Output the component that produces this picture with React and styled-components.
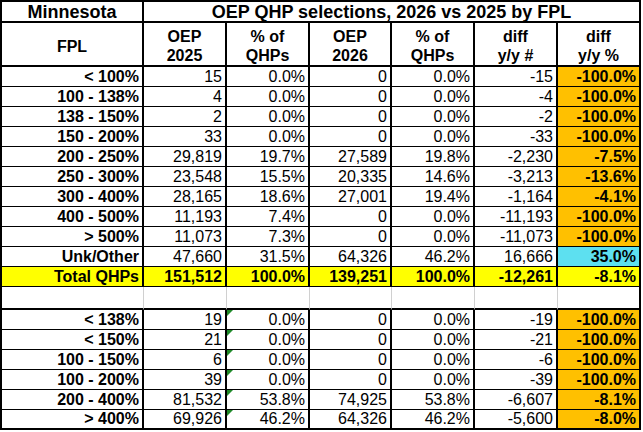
import React from "react";
import styled, { createGlobalStyle, css } from "styled-components";

const GlobalStyle = createGlobalStyle`
  html, body {
    margin: 0;
    padding: 0;
    background: #fff;
  }
  body {
    font-family: "Liberation Sans", Arial, sans-serif;
    color: #000;
  }
`;

const COLORS = {
  orange: "#ffc000",
  yellow: "#ffff00",
  cyan: "#5de0f0",
};

const Sheet = styled.div`
  display: grid;
  grid-template-columns: 142px 83px 83px 82px 83px 83px 83px;
  grid-template-rows: 21px 44px repeat(11, 20px) 23px repeat(6, 20px);
  width: max-content;
  border-left: 2px solid #000;
  border-top: 2px solid #000;
`;

const Cell = styled.div`
  position: relative;
  box-sizing: border-box;
  display: flex;
  align-items: center;
  justify-content: ${(p) => (p.$center ? "center" : "flex-end")};
  padding: 0 ${(p) => (p.$center ? 0 : 3)}px 0 0;
  border-right: 2px solid #000;
  border-bottom: ${(p) => p.$bottom || "1px solid #000"};
  background: ${(p) => (p.$bg ? COLORS[p.$bg] : "#fff")};
  font-size: 16px;
  font-weight: ${(p) => (p.$bold ? 700 : 400)};
  white-space: nowrap;
  line-height: 1;
  ${(p) =>
    p.$span &&
    css`
      grid-column: span ${p.$span};
    `}
  ${(p) =>
    p.$flag &&
    css`
      &::before {
        content: "";
        position: absolute;
        top: 0;
        left: 0;
        border-top: 6px solid #1f8a2a;
        border-right: 6px solid transparent;
      }
    `}
`;

const TitleCell = styled(Cell)`
  font-size: 18px;
  font-weight: 700;
  border-bottom: 2px solid #000;
`;

const HeadCell = styled(Cell)`
  flex-direction: column;
  justify-content: center;
  padding-top: 4px;
  border-bottom: 2px solid #000;
  font-weight: 700;
  line-height: 19px;
`;

const GapCell = styled.div`
  box-sizing: border-box;
  border-right: 1px solid ${(p) => (p.$last ? "#000" : "#d0d0d0")};
  border-bottom: 2px solid #000;
  ${(p) => p.$last && "border-right-width: 2px;"}
`;

const heads = [
  ["OEP", "2025"],
  ["% of", "QHPs"],
  ["OEP", "2026"],
  ["% of", "QHPs"],
  ["diff", "y/y #"],
  ["diff", "y/y %"],
];

const top = [
  ["< 100%", "15", "0.0%", "0", "0.0%", "-15", "-100.0%", "orange"],
  ["100 - 138%", "4", "0.0%", "0", "0.0%", "-4", "-100.0%", "orange"],
  ["138 - 150%", "2", "0.0%", "0", "0.0%", "-2", "-100.0%", "orange"],
  ["150 - 200%", "33", "0.0%", "0", "0.0%", "-33", "-100.0%", "orange"],
  ["200 - 250%", "29,819", "19.7%", "27,589", "19.8%", "-2,230", "-7.5%", "orange"],
  ["250 - 300%", "23,548", "15.5%", "20,335", "14.6%", "-3,213", "-13.6%", "orange"],
  ["300 - 400%", "28,165", "18.6%", "27,001", "19.4%", "-1,164", "-4.1%", "orange"],
  ["400 - 500%", "11,193", "7.4%", "0", "0.0%", "-11,193", "-100.0%", "orange"],
  ["> 500%", "11,073", "7.3%", "0", "0.0%", "-11,073", "-100.0%", "orange"],
  ["Unk/Other", "47,660", "31.5%", "64,326", "46.2%", "16,666", "35.0%", "cyan"],
];

const total = ["Total QHPs", "151,512", "100.0%", "139,251", "100.0%", "-12,261", "-8.1%"];

const bottom = [
  ["< 138%", "19", "0.0%", "0", "0.0%", "-19", "-100.0%"],
  ["< 150%", "21", "0.0%", "0", "0.0%", "-21", "-100.0%"],
  ["100 - 150%", "6", "0.0%", "0", "0.0%", "-6", "-100.0%"],
  ["100 - 200%", "39", "0.0%", "0", "0.0%", "-39", "-100.0%"],
  ["200 - 400%", "81,532", "53.8%", "74,925", "53.8%", "-6,607", "-8.1%"],
  ["> 400%", "69,926", "46.2%", "64,326", "46.2%", "-5,600", "-8.0%"],
];

function DataRow({ row, flagged, last }) {
  const [label, ...vals] = row;
  const accent = row[7] || "orange";
  const edge = last ? "2px solid #000" : undefined;
  return (
    <>
      <Cell $bold $bottom={edge}>{label}</Cell>
      {vals.slice(0, 6).map((v, i) => (
        <Cell
          key={i}
          $bold={i === 5}
          $bg={i === 5 ? accent : undefined}
          $flag={flagged && i === 1}
          $bottom={edge}
        >
          {v}
        </Cell>
      ))}
    </>
  );
}

export default function App() {
  return (
    <>
      <GlobalStyle />
      <Sheet>
        <TitleCell $center>Minnesota</TitleCell>
        <TitleCell $center $span={6}>
          OEP QHP selections, 2026 vs 2025 by FPL
        </TitleCell>

        <HeadCell $center>FPL</HeadCell>
        {heads.map(([a, b], i) => (
          <HeadCell key={i} $center>
            <span>{a}</span>
            <span>{b}</span>
          </HeadCell>
        ))}

        {top.map((r) => (
          <DataRow key={r[0]} row={r} />
        ))}

        {total.map((v, i) => (
          <Cell key={i} $bold $bg="yellow">
            {v}
          </Cell>
        ))}

        {Array.from({ length: 7 }).map((_, i) => (
          <GapCell key={i} $last={i === 6} />
        ))}

        {bottom.map((r, i) => (
          <DataRow key={r[0]} row={r} flagged last={i === bottom.length - 1} />
        ))}
      </Sheet>
    </>
  );
}
